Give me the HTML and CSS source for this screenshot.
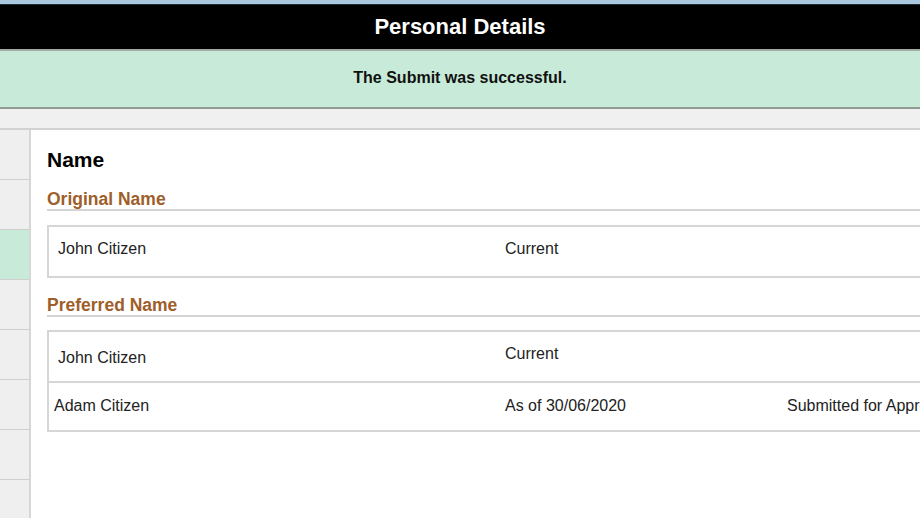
FILE: index.html
```html
<!DOCTYPE html>
<html lang="en">
<head>
  <meta charset="UTF-8" />
  <title>Personal Details</title>
  <link rel="stylesheet" href="styles.css">
</head>
<body>
  <div class="top-strip"></div>
  <header class="page-title">Personal Details</header>

  <div class="banner">The Submit was successful.</div>

  <div class="toolbar"></div>

  <div class="main">
    <ul class="side-nav">
      <li></li>
      <li></li>
      <li class="active"></li>
      <li></li>
      <li></li>
      <li></li>
      <li></li>
      <li></li>
    </ul>

    <section class="content">
      <h1 class="section-title">Name</h1>

      <h2 class="group-title">Original Name</h2>
      <div class="name-box">
        <div class="row row-tall">
          <div class="cell name">John Citizen</div>
          <div class="cell">Current</div>
          <div class="cell"></div>
        </div>
      </div>

      <h2 class="group-title group-next">Preferred Name</h2>
      <div class="name-box box-next">
        <div class="row row-tall">
          <div class="cell name cell-low">John Citizen</div>
          <div class="cell">Current</div>
          <div class="cell"></div>
        </div>
        <div class="row">
          <div class="cell name cell-tight cell-mid">Adam Citizen</div>
          <div class="cell cell-mid">As of 30/06/2020</div>
          <div class="cell cell-mid">Submitted for Approval</div>
        </div>
      </div>
    </section>
  </div>
</body>
</html>
```

FILE: styles.css
```css
* {
  box-sizing: border-box;
}

html, body {
  margin: 0;
  padding: 0;
  height: 100%;
  overflow: hidden;
  font-family: 'Liberation Sans', Arial, sans-serif;
  background-color: #ffffff;
  color: #222222;
}

.top-strip {
  height: 5px;
  background-color: #a9c8de;
  border-bottom: 1px solid #1d2a30;
}

.page-title {
  height: 46px;
  line-height: 43px;
  background: #000000;
  color: #ffffff;
  text-align: center;
  font-size: 22px;
  font-weight: bold;
  border-bottom: 2px solid #a3aba3;
}

.banner {
  height: 58px;
  line-height: 54px;
  background-color: #c8ebd9;
  text-align: center;
  font-size: 16px;
  font-weight: bold;
  color: #111111;
  border-bottom: 2px solid #8e9a92;
}

.toolbar {
  height: 21px;
  background-color: #f0f0f0;
  border-bottom: 2px solid #d2d2d2;
}

.main {
  display: flex;
  height: 400px;
}

.side-nav {
  list-style: none;
  margin: 0;
  padding: 0;
  width: 31px;
  flex: none;
  background-color: #efefef;
  border-right: 2px solid #d6d6d6;
}

.side-nav li {
  height: 50px;
  border-bottom: 1px solid #cfcfcf;
}

.side-nav li.active {
  background-color: #c8ebd9;
}

.content {
  flex: none;
  width: 1200px;
  padding-left: 16px;
}

.section-title {
  margin: 18px 0 0;
  font-size: 21px;
  line-height: 24px;
  color: #000000;
}

.group-title {
  margin: 17px 0 0;
  font-size: 17.5px;
  line-height: 20px;
  color: #9e5e2a;
  border-bottom: 2px solid #d4d4d4;
}

.group-next {
  margin-top: 17px;
}

.name-box {
  margin-top: 14px;
  border: 2px solid #d6d6d6;
  border-right: none;
}

.box-next {
  margin-top: 13px;
}

.row {
  display: grid;
  grid-template-columns: 456px 282px 1fr;
  height: 47px;
  font-size: 16px;
  line-height: 18px;
}

.row + .row {
  height: 49px;
  border-top: 2px solid #d6d6d6;
}

.row-tall {
  height: 49px;
}

.cell {
  padding-top: 13px;
  white-space: nowrap;
}

.cell.name {
  padding-left: 9px;
}

.cell-low {
  padding-top: 17px;
}

.cell.cell-tight {
  padding-left: 5px;
}

.cell-mid {
  padding-top: 14px;
}
```
